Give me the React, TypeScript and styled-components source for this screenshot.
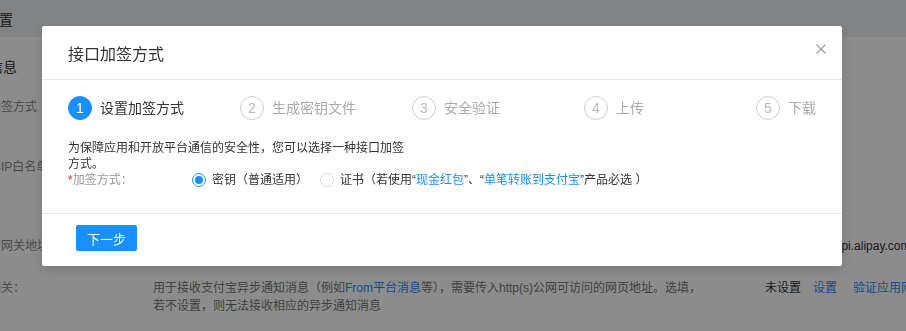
import React from "react";
import styled, { createGlobalStyle } from "styled-components";

const GlobalStyle = createGlobalStyle`
	html, body {
		margin: 0;
		padding: 0;
	}
	body {
		font-family: "Liberation Sans", "Noto Sans CJK SC", sans-serif;
		background: #fff;
		overflow: hidden;
	}
`;

/* ---------- page behind the dialog ---------- */

const Page = styled.div`
	width: 100vw;
	height: 100vh;
	overflow: hidden;
	background: #fff;
`;

const TopBar = styled.div`
	height: 37px;
	background: #eceef0;
`;

const TopTitle = styled.div`
	margin-left: -43px;
	font-size: 14px;
	line-height: 40px;
	color: #333;
	white-space: nowrap;
`;

const Content = styled.div`
	margin-left: -35px;
	width: calc(100% + 35px);
`;

const SectionTitle = styled.div`
	margin: 20px 0 0 -4px;
	font-size: 14px;
	line-height: 20px;
	color: #333;
	white-space: nowrap;
`;

interface IRow {
	readonly $h: number;
	readonly $top: number;
}

const Row = styled.div<IRow>`
	display: grid;
	grid-template-columns: 188px 612px 1fr;
	box-sizing: border-box;
	height: ${({ $h }) => $h}px;
	padding-top: ${({ $top }) => $top}px;
	font-size: 12px;
	line-height: 18px;
	white-space: nowrap;
`;

const RowLabel = styled.div`
	color: #888;
`;

const RowDesc = styled.div`
	color: #777;
`;

const Status = styled.div`
	display: flex;
	gap: 12px;
	color: #333;
`;

const Url = styled.span`
	margin-left: 7px;
`;

const PageLink = styled.span`
	color: #1890ff;
	& + & {
		margin-left: 4px;
	}
`;

const Mask = styled.div`
	position: fixed;
	inset: 0;
	background: rgba(0, 0, 0, 0.45);
`;

/* ---------- dialog ---------- */

const Modal = styled.div`
	position: fixed;
	top: 26px;
	left: 42px;
	width: 800px;
	background: #fff;
	border-radius: 2px;
	box-shadow: 0 4px 12px rgba(0, 0, 0, 0.15);
	font-family: "Liberation Sans", "Noto Sans CJK SC", sans-serif;
`;

const Header = styled.div`
	display: flex;
	align-items: flex-start;
	justify-content: space-between;
	padding: 18px 15px 13px 26px;
	border-bottom: 1px solid #e8e8e8;
`;

const Title = styled.div`
	font-size: 16px;
	line-height: 22px;
	color: #333;
`;

const Close = styled.button`
	margin-top: -1px;
	width: 12px;
	height: 12px;
	padding: 0;
	border: 0;
	background: none;
	cursor: pointer;
	display: flex;
`;

const Body = styled.div`
	padding: 16px 26px 25px;
`;

const Steps = styled.div`
	display: flex;
	align-items: center;
`;

interface IStep {
	readonly $last: boolean;
}

const Step = styled.div<IStep>`
	display: flex;
	align-items: center;
	flex: ${({ $last }) => ($last ? "none" : "1")};
`;

interface IActive {
	readonly $active: boolean;
}

const StepIcon = styled.div<IActive>`
	box-sizing: border-box;
	width: 24px;
	height: 24px;
	border-radius: 50%;
	border: 1px solid ${({ $active }) => ($active ? "#1890ff" : "#cfcfcf")};
	background: ${({ $active }) => ($active ? "#1890ff" : "#fff")};
	color: ${({ $active }) => ($active ? "#fff" : "#bbb")};
	font-size: 14px;
	line-height: 22px;
	text-align: center;
`;

const StepLabel = styled.div<IActive>`
	margin-left: 8px;
	font-size: 14px;
	line-height: 22px;
	color: ${({ $active }) => ($active ? "#333" : "#aaa")};
	white-space: nowrap;
`;

const Intro = styled.p`
	margin: 20px 0 0;
	width: 340px;
	font-size: 12px;
	line-height: 16px;
	color: #333;
`;

const FormRow = styled.div`
	display: flex;
	align-items: center;
	font-size: 12px;
	line-height: 16px;
`;

const FormLabel = styled.div`
	width: 124px;
	color: #999;
`;

const Required = styled.span`
	color: #f5222d;
`;

const RadioGroup = styled.div`
	display: flex;
	align-items: center;
	gap: 12px;
`;

const RadioItem = styled.label`
	display: flex;
	align-items: center;
	color: #333;
	cursor: pointer;
	white-space: nowrap;
`;

const RadioDot = styled.span<IActive>`
	box-sizing: border-box;
	position: relative;
	width: 14px;
	height: 14px;
	margin-right: 6px;
	border-radius: 50%;
	border: 1px solid ${({ $active }) => ($active ? "#1890ff" : "#d9d9d9")};
	background: #fff;

	&::after {
		content: "";
		position: absolute;
		left: 2px;
		top: 2px;
		width: 8px;
		height: 8px;
		border-radius: 50%;
		background: #1890ff;
		display: ${({ $active }) => ($active ? "block" : "none")};
	}
`;

const Link = styled.span`
	color: #1890ff;
`;

const Footer = styled.div`
	padding: 11px 0 15px 34px;
	border-top: 1px solid #e8e8e8;
`;

const PrimaryButton = styled.button`
	width: 61px;
	height: 26px;
	padding: 0;
	border: 0;
	border-radius: 2px;
	background: #1890ff;
	color: #fff;
	font-family: inherit;
	font-size: 13px;
	cursor: pointer;
`;

const STEPS = ["设置加签方式", "生成密钥文件", "安全验证", "上传", "下载"];

function App() {
	return (
		<>
			<GlobalStyle />
			<Page>
				<TopBar>
					<TopTitle>开发设置</TopTitle>
				</TopBar>
				<Content>
					<SectionTitle>开发信息</SectionTitle>
					<Row $h={50} $top={21}>
						<RowLabel>接口加签方式</RowLabel>
					</Row>
					<Row $h={80} $top={31}>
						<RowLabel>服务器IP白名单</RowLabel>
					</Row>
					<Row $h={72} $top={30}>
						<RowLabel>支付宝网关地址</RowLabel>
						<RowDesc />
						<Status>
							<Url>https://openapi.alipay.com/gateway.do</Url>
						</Status>
					</Row>
					<Row $h={52} $top={0}>
						<RowLabel>应用网关：</RowLabel>
						<RowDesc>
							用于接收支付宝异步通知消息（例如<PageLink>From平台消息</PageLink>
							等），需要传入http(s)公网可访问的网页地址。选填，
							<br />
							若不设置，则无法接收相应的异步通知消息
						</RowDesc>
						<Status>
							<span>未设置</span>
							<PageLink>设置</PageLink>
							<PageLink>验证应用网关</PageLink>
						</Status>
					</Row>
				</Content>
			</Page>
			<Mask />
			<Modal>
				<Header>
					<Title>接口加签方式</Title>
					<Close aria-label="关闭">
						<svg width="12" height="12" viewBox="0 0 12 12">
							<path d="M1.5 1.5 L10.5 10.5 M10.5 1.5 L1.5 10.5" stroke="#999" strokeWidth="1.1" fill="none" />
						</svg>
					</Close>
				</Header>
				<Body>
					<Steps>
						{STEPS.map((s, i) => (
							<Step key={s} $last={i === STEPS.length - 1}>
								<StepIcon $active={i === 0}>{i + 1}</StepIcon>
								<StepLabel $active={i === 0}>{s}</StepLabel>
							</Step>
						))}
					</Steps>
					<Intro>为保障应用和开放平台通信的安全性，您可以选择一种接口加签方式。</Intro>
					<FormRow>
						<FormLabel>
							<Required>*</Required>加签方式：
						</FormLabel>
						<RadioGroup>
							<RadioItem>
								<RadioDot $active={true} />
								密钥（普通适用）
							</RadioItem>
							<RadioItem>
								<RadioDot $active={false} />
								证书（若使用“<Link>现金红包</Link>”、“<Link>单笔转账到支付宝</Link>”产品必选 ）
							</RadioItem>
						</RadioGroup>
					</FormRow>
				</Body>
				<Footer>
					<PrimaryButton>下一步</PrimaryButton>
				</Footer>
			</Modal>
		</>
	);
}

export default App;
